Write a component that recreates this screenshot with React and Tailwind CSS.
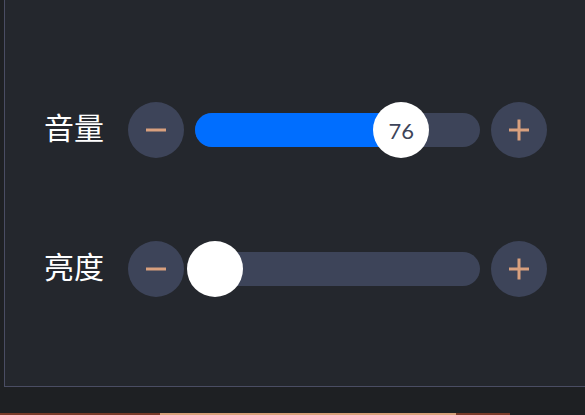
import { useState } from "react";

const TRACK_WIDTH = 285;
const THUMB = 56;
const INSET = 20;

function StepButton({ kind, onClick }) {
  return (
    <button
      type="button"
      onClick={onClick}
      className="grid h-[56px] w-[56px] shrink-0 place-items-center rounded-full bg-[#3d4459]"
    >
      <svg width="22" height="22" viewBox="0 0 22 22" fill="none">
        <rect x="1" y="9.5" width="20" height="3" fill="#d9a07e" />
        {kind === "plus" ? <rect x="9.5" y="0.5" width="3" height="21" fill="#d9a07e" /> : null}
      </svg>
    </button>
  );
}

function SliderRow({ label, value, onChange, showValue }) {
  const center = INSET + (value / 100) * (TRACK_WIDTH - INSET * 2);

  return (
    <div className="flex h-[56px] items-center">
      <span className="-mt-[8px] w-[84px] shrink-0 text-[30px] leading-none text-white">{label}</span>
      <StepButton kind="minus" onClick={() => onChange(Math.max(0, value - 1))} />
      <div className="relative ml-[11px] h-[34px] w-[285px] shrink-0 rounded-full bg-[#3d4459]">
        {value > 0 ? (
          <div className="absolute inset-y-0 left-0 rounded-full bg-[#006eff]" style={{ width: center }} />
        ) : null}
        <div
          className="absolute top-1/2 grid h-[56px] w-[56px] -translate-y-1/2 place-items-center rounded-full bg-white text-[22px] text-[#3d4459]"
          style={{ left: center - THUMB / 2, fontFamily: "Lato, 'Open Sans', sans-serif" }}
        >
          {showValue ? value : null}
        </div>
      </div>
      <div className="ml-[11px]">
        <StepButton kind="plus" onClick={() => onChange(Math.min(100, value + 1))} />
      </div>
    </div>
  );
}

export default function App() {
  const [volume, setVolume] = useState(76);
  const [brightness, setBrightness] = useState(0);

  return (
    <div
      className="flex h-[415px] w-[585px] flex-col overflow-hidden bg-[#1e2023]"
      style={{ fontFamily: "'Noto Sans CJK SC', 'Noto Sans', sans-serif" }}
    >
      <div className="ml-[4px] flex h-[387px] flex-col gap-[83px] border-b border-l border-[#4a4d63] bg-[#24272d] pl-[39px] pt-[102px]">
        <SliderRow label="音量" value={volume} onChange={setVolume} showValue />
        <SliderRow label="亮度" value={brightness} onChange={setBrightness} />
      </div>
      <div className="mt-auto flex h-[2px]">
        <div className="w-[160px] bg-[#7a3a28]" />
        <div className="w-[296px] bg-[#d9a07a]" />
        <div className="w-[54px] bg-[#7a3a28]" />
        <div className="flex-1" />
      </div>
    </div>
  );
}
